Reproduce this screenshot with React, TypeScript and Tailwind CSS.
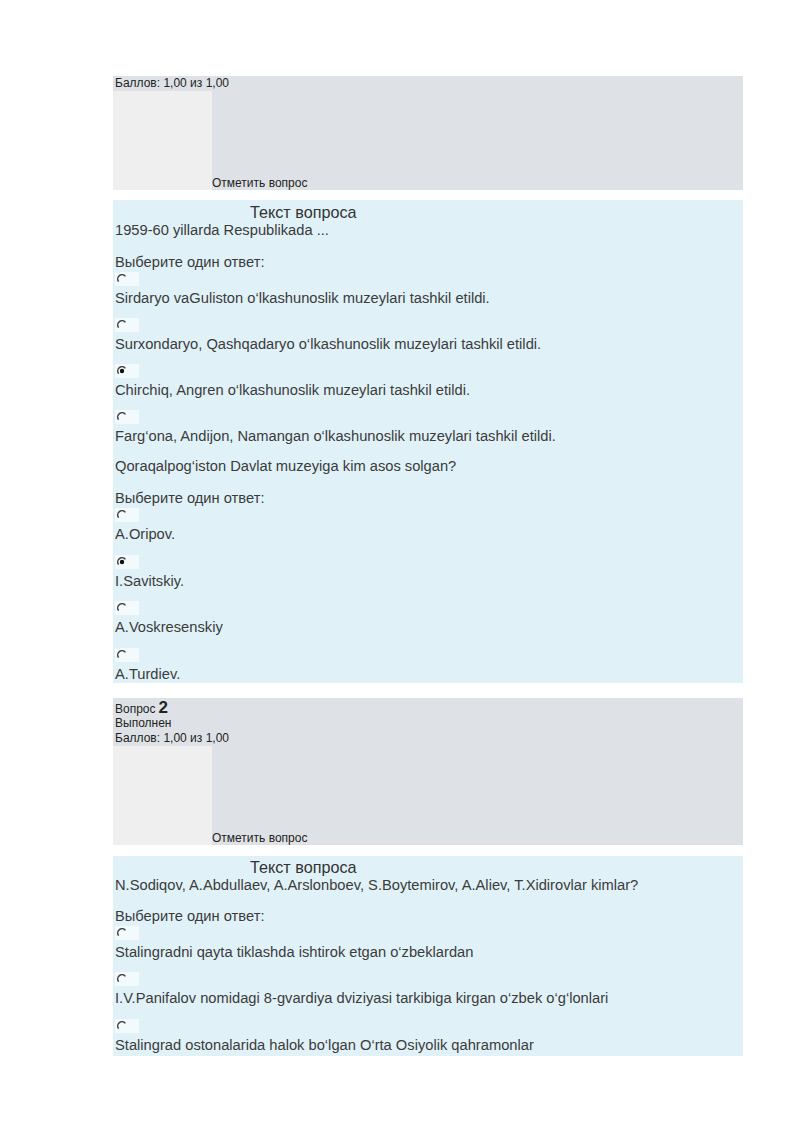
const q1a = [
  { text: "Sirdaryo vaGuliston o\u2018lkashunoslik muzeylari tashkil etildi.", checked: false },
  { text: "Surxondaryo, Qashqadaryo o\u2018lkashunoslik muzeylari tashkil etildi.", checked: false },
  { text: "Chirchiq, Angren o\u2018lkashunoslik muzeylari tashkil etildi.", checked: true },
  { text: "Farg\u2018ona, Andijon, Namangan o\u2018lkashunoslik muzeylari tashkil etildi.", checked: false },
];

const q1b = [
  { text: "A.Oripov.", checked: false },
  { text: "I.Savitskiy.", checked: true },
  { text: "A.Voskresenskiy", checked: false },
  { text: "A.Turdiev.", checked: false },
];

const q2 = [
  { text: "Stalingradni qayta tiklashda ishtirok etgan o\u2018zbeklardan", checked: false },
  { text: "I.V.Panifalov nomidagi 8-gvardiya dviziyasi tarkibiga kirgan o\u2018zbek o\u2018g\u2018lonlari", checked: false },
  { text: "Stalingrad ostonalarida halok bo\u2018lgan O\u2018rta Osiyolik qahramonlar", checked: false },
];

function Radio({ checked }: { checked: boolean }) {
  return (
    <div className="h-[14px] flex items-center">
      <div className="h-[14px] w-[24px] bg-[#f3fafc] flex items-center pl-[2px]">
        <svg width="10" height="10" viewBox="0 0 10 10">
          <path d="M1.6 7.6 A4 4 0 0 1 8.4 2.4" fill="none" stroke="#444" strokeWidth="1.5" />
          {checked && <circle cx="5" cy="5" r="2.2" fill="#111" />}
        </svg>
      </div>
    </div>
  );
}

function Options({ items, gap }: { items: { text: string; checked: boolean }[]; gap: string }) {
  return (
    <div className={`mt-[1px] flex flex-col ${gap}`}>
      {items.map((o) => (
        <div key={o.text}>
          <Radio checked={o.checked} />
          <div className="mt-[3px] leading-[18px] text-[14.7px] text-[#3b3b3b]">{o.text}</div>
        </div>
      ))}
    </div>
  );
}

function InfoBox({ num, h }: { num?: number; h: string }) {
  return (
    <div className={`flex flex-col bg-[#dee2e6] text-[12px] text-[#222] ${h}`}>
      {num !== undefined && (
        <>
          <div className="mt-[2px] flex h-[15px] items-baseline gap-[3px] pl-[2px] leading-[15px]">
            <span>Вопрос</span>
            <span className="text-[17px] font-bold leading-[15px]">{num}</span>
          </div>
          <div className="pt-[1px] pl-[2px] leading-[15px]">Выполнен</div>
        </>
      )}
      <div className="pl-[2px] leading-[15px]">Баллов: 1,00 из 1,00</div>
      <div className="flex flex-1">
        <div className="w-[99px] bg-[#efefef]" />
        <div className="flex flex-1 items-end">
          <span className="leading-[14px]">Отметить вопрос</span>
        </div>
      </div>
    </div>
  );
}

export default function App() {
  return (
    <div className="min-h-[1131px] bg-white pt-[76px] font-['Liberation_Sans',Arial,sans-serif]">
      <div className="ml-[113px] w-[630px]">
        <InfoBox h="h-[114px]" />

        <div className="mt-[10px] bg-[#e0f2f8] pt-[3px] pl-[2px]">
          <div className="pl-[135px] text-[16.2px] leading-[18px] text-[#333]">Текст вопроса</div>
          <div className="text-[14.7px] leading-[18px] text-[#3b3b3b]">1959-60 yillarda Respublikada ...</div>
          <div className="mt-[14px] text-[14.7px] leading-[18px] text-[#3b3b3b]">Выберите один ответ:</div>
          <Options items={q1a} gap="gap-[11px]" />
          <div className="mt-[12px] text-[14.7px] leading-[18px] text-[#3b3b3b]">Qoraqalpog{"\u2018"}iston Davlat muzeyiga kim asos solgan?</div>
          <div className="mt-[14px] text-[14.7px] leading-[18px] text-[#3b3b3b]">Выберите один ответ:</div>
          <Options items={q1b} gap="gap-[11.5px]" />
        </div>

        <div className="mt-[15px]">
          <InfoBox num={2} h="h-[147px]" />
        </div>

        <div className="mt-[11px] bg-[#e0f2f8] pt-[2px] pb-[2px] pl-[2px]">
          <div className="pl-[135px] text-[16.2px] leading-[18px] text-[#333]">Текст вопроса</div>
          <div className="text-[14.7px] leading-[18px] text-[#3b3b3b]">
            N.Sodiqov, A.Abdullaev, A.Arslonboev, S.Boytemirov, A.Aliev, T.Xidirovlar kimlar?
          </div>
          <div className="mt-[13px] text-[14.7px] leading-[18px] text-[#3b3b3b]">Выберите один ответ:</div>
          <Options items={q2} gap="gap-[11.5px]" />
        </div>
      </div>
    </div>
  );
}
